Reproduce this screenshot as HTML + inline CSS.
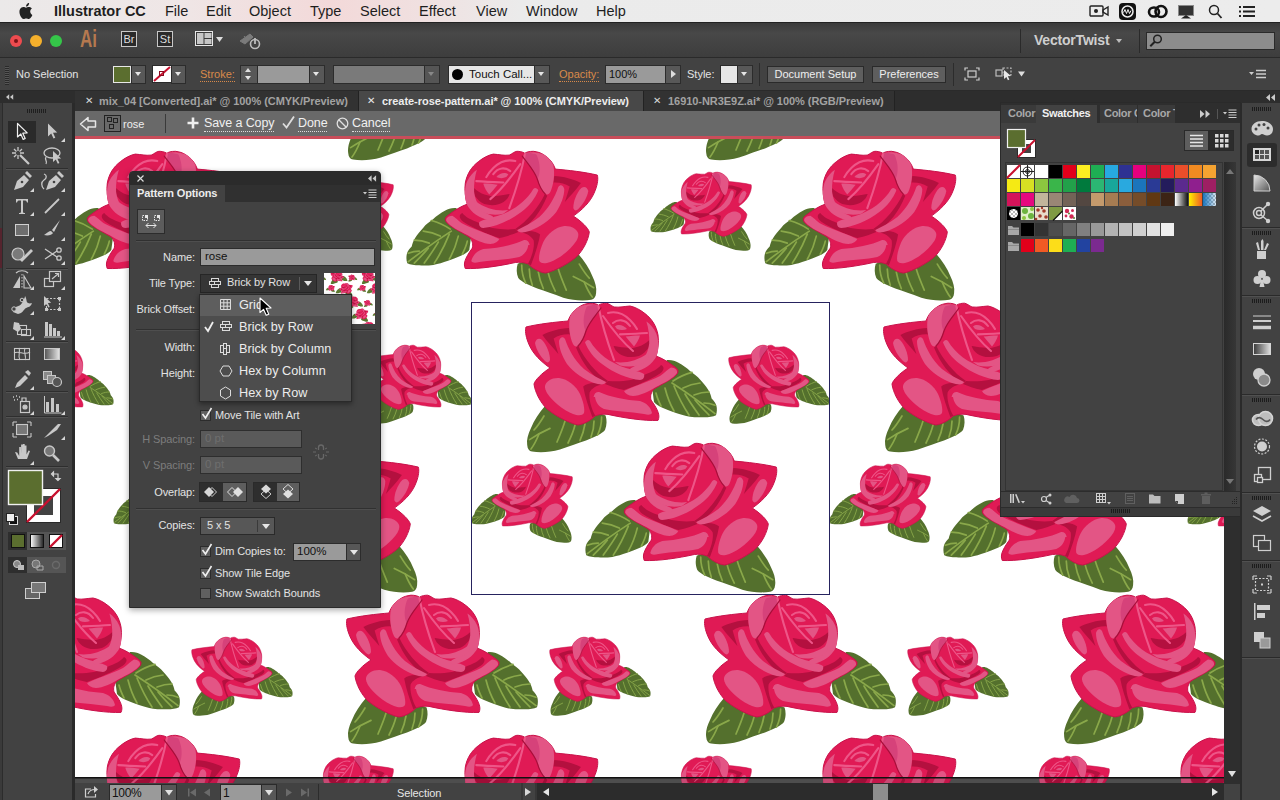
<!DOCTYPE html>
<html><head><meta charset="utf-8"><title>Illustrator CC</title>
<style>
*{box-sizing:border-box;margin:0;padding:0}
html,body{width:1280px;height:800px;overflow:hidden;background:#424242}
body{position:relative;font-family:"Liberation Sans",sans-serif;font-size:12px;color:#e0e0e0;-webkit-font-smoothing:antialiased}
.abs{position:absolute}
#menubar{position:absolute;left:0;top:0;width:1280px;height:22px;background:linear-gradient(90deg,#ebe9e9 0,#efe6e6 180px,#f3d9d9 330px,#f0e0e0 420px,#ebebeb 520px,#ececec 100%);color:#1e1e1e;font-size:14.5px}
#menubar span{position:absolute;top:2px;line-height:18px;white-space:nowrap}
#appbar{position:absolute;left:0;top:22px;width:1280px;height:36px;background:linear-gradient(#3b3b3b,#484848 30%,#3d3d3d 100%);border-top:1px solid #222;border-bottom:1px solid #2a2a2a}
#ctrlbar{position:absolute;left:0;top:58px;width:1280px;height:33px;background:#424242;border-bottom:1px solid #2a2a2a}
#tabbar{position:absolute;left:0;top:91px;width:1280px;height:20px;background:#2d2d2d}
#patbar{position:absolute;left:75px;top:111px;width:1165px;height:25px;background:#696969}
#redline{position:absolute;left:75px;top:136px;width:1165px;height:3px;background:#c94d5a}
#toolbar{position:absolute;left:0;top:103px;width:73px;height:697px;background:#424242;border-left:3px solid #2c2c2c}
#canvas{position:absolute;left:75px;top:139px;width:1149px;height:644px;background:#fff;overflow:hidden}
.lbl{position:absolute;white-space:nowrap;line-height:14px}
.fld{position:absolute;background:#9a9a9a;border:1px solid #2c2c2c;color:#111}
.dd{position:absolute;background:#585858;border:1px solid #2c2c2c}
.tri{position:absolute;width:0;height:0;border-left:4px solid transparent;border-right:4px solid transparent;border-top:5px solid #e6e6e6}
</style></head><body>
<div id="canvas"><svg width="1149" height="644" viewBox="0 0 1149 644" style="position:absolute;left:0;top:0">
<defs><g id="rose" transform="scale(0.2)">
<!-- leaves -->
<path fill="#54702d" d="M125,550 C95,585 70,620 55,660 C40,690 32,720 36,745 C38,765 45,775 60,778 C100,785 150,782 200,768 C250,750 290,735 330,722 C370,705 410,690 425,670 C435,645 435,620 428,598 L330,560 Z"/>
<path fill="#54702d" d="M735,320 C760,318 775,325 790,332 C815,345 835,360 850,375 C870,390 888,402 900,418 C915,435 930,450 940,468 C950,482 955,498 958,512 C970,525 978,535 982,548 C986,565 985,582 980,596 C965,604 945,606 920,606 C895,608 870,606 850,604 C825,600 800,592 780,585 C755,578 735,568 715,560 C695,552 680,542 670,530 L662,470 Z"/>
<g fill="none" stroke="#8aa84a" stroke-width="8.500" stroke-linecap="round">
<path d="M150,662 C110,680 75,700 48,718"/><path d="M95,690 C85,715 70,745 55,765"/>
<path d="M225,625 C215,660 200,695 185,730"/><path d="M275,645 C268,675 255,705 240,735"/><path d="M325,640 C320,670 312,695 300,722"/><path d="M370,625 C370,655 365,680 355,705"/><path d="M408,605 C408,640 400,670 388,695"/><path d="M120,600 C105,625 90,650 70,670"/>
<path d="M760,435 C830,480 900,530 975,588"/>
<path d="M765,425 C795,405 830,390 860,382"/><path d="M815,460 C845,445 875,438 900,435"/><path d="M870,495 C895,485 920,480 945,480"/><path d="M920,535 C940,535 960,540 975,546"/>
<path d="M680,485 C685,510 695,530 705,550"/><path d="M725,460 C735,500 750,540 770,575"/><path d="M770,450 C790,500 815,550 845,595"/><path d="M825,490 C845,525 870,560 895,595"/><path d="M875,520 C895,545 920,570 945,595"/>
</g>
<!-- base -->
<path fill="#e01a55" stroke="#c8124a" stroke-width="5" stroke-linejoin="round" d="M30,155 C25,170 28,200 40,230 C55,270 80,310 150,360 C110,385 75,420 70,440 C75,480 100,530 135,565 C190,610 260,640 290,645 C320,640 350,625 375,600 C400,590 420,590 440,592 C520,610 620,625 690,622 C700,600 695,575 655,520 C650,500 655,480 670,465 C710,440 765,415 785,390 C795,375 790,365 775,355 C750,335 710,310 680,300 C690,270 695,230 690,195 C682,150 660,115 625,88 C600,68 575,55 550,50 C520,52 500,58 470,55 C455,48 445,38 432,36 C420,36 405,38 392,46 C385,40 370,36 350,36 C330,38 312,44 300,52 C270,70 250,95 240,125 C180,130 90,140 30,155 Z"/>
<!-- dark shadows -->
<path fill="#b4103f" d="M112,195 C150,175 200,162 245,160 L250,192 C222,190 192,196 168,212 C176,240 184,265 192,290 C168,262 135,228 112,195 Z"/>
<path fill="#b4103f" d="M292,250 C325,320 380,385 440,425 C432,430 425,433 416,434 C360,398 312,338 280,258 Z"/>
<path fill="#b4103f" d="M440,425 C500,430 570,425 620,395 C660,380 690,365 705,345 C725,355 720,372 700,388 C650,420 580,450 520,470 C480,462 450,450 425,440 Z"/>
<path fill="#b4103f" d="M468,250 C480,290 530,318 595,300 C635,282 655,245 652,215 C625,245 575,268 525,258 C500,255 480,252 468,250 Z"/>
<path fill="#b4103f" d="M316,452 C335,436 368,430 412,440 C382,448 358,462 348,482 C343,512 355,560 376,598 L362,606 C345,560 325,505 316,452 Z"/>
<!-- pink highlights -->
<path fill="#e35585" d="M250,105 C265,75 285,58 305,50 C335,40 365,38 390,46 C402,56 400,70 390,85 C360,110 340,140 328,175 C320,205 310,230 295,245 C285,255 272,255 265,240 C250,210 240,150 250,105 Z"/>
<path fill="#d6427a" d="M335,52 C355,44 378,42 392,48 C402,58 398,72 388,86 C362,110 342,140 330,176 C318,160 315,120 322,90 C326,72 330,60 335,52 Z"/>
<path fill="#e35585" d="M75,235 C80,215 95,208 110,220 C135,245 150,290 150,320 C145,335 135,335 125,325 C100,300 80,265 75,235 Z"/>
<path fill="#e35585" d="M195,225 C200,205 215,200 225,215 C240,260 270,320 320,365 C360,395 400,415 430,430 C425,445 400,445 370,435 C320,418 270,385 235,340 C210,300 195,260 195,225 Z"/>
<path fill="#e35585" d="M325,232 C330,220 342,216 350,225 C385,285 450,335 530,360 C570,372 605,380 620,390 C625,405 615,420 600,420 C540,415 470,385 410,340 C370,310 340,270 325,232 Z"/>
<path fill="#e35585" d="M125,450 C130,425 160,408 195,410 C240,415 280,450 300,490 C315,525 325,560 320,585 C310,600 290,598 265,590 C215,570 160,525 135,485 C128,472 124,460 125,450 Z"/>
<path fill="#e35585" d="M368,505 C370,488 382,478 396,480 C450,505 530,520 600,525 C635,535 655,560 660,585 C655,595 640,595 620,590 C550,578 470,578 420,565 C395,555 378,530 375,505 Z"/>
<path fill="#e35585" d="M520,475 C560,455 640,430 700,400 C725,385 740,365 755,358 C775,360 788,370 785,385 C770,410 720,435 680,455 C640,480 600,498 565,500 C540,498 525,488 520,475 Z"/>
<path fill="#e35585" d="M528,203 C560,198 595,196 600,198 C595,215 585,235 570,252 C555,235 540,218 528,203 Z"/>
<path fill="#e35585" d="M632,128 C650,140 668,160 680,185 C690,205 694,240 690,275 C686,295 680,308 672,318 C648,354 600,378 558,382 C543,374 548,362 563,356 C608,338 640,296 646,238 C648,200 642,160 632,128 Z"/>
<path fill="#e35585" d="M475,152 C490,140 515,142 535,165 C520,172 500,172 485,165 Z"/>
<path fill="#e35585" d="M475,330 C520,338 590,325 640,285 C650,296 642,315 625,330 C595,352 540,358 500,348 Z"/>
<!-- thin lines -->
<g fill="none" stroke="#ee5688" stroke-width="10.500" stroke-linecap="round">
<path d="M392,50 C405,120 430,210 470,320"/>
<path d="M415,100 C450,150 500,220 565,275"/>
<path d="M440,85 C480,75 520,90 550,120 C570,140 580,155 585,165"/>
<path d="M500,192 C545,190 590,188 635,185"/>
<path d="M465,135 C490,115 525,115 550,150"/>
</g>
<g fill="none" stroke="#a80e3a" stroke-width="6" stroke-linecap="round">
<path d="M405,60 C385,90 345,130 330,175 C320,210 305,235 290,250"/>
</g>
</g>
<g id="tile">
<use href="#rose" transform="translate(49,-6)"/>
<use href="#rose" transform="translate(254.8,39.4) scale(0.527)"/>
<use href="#rose" transform="translate(104.3,158.4) scale(-0.527,0.527)"/>
<use href="#rose" transform="translate(311.3,134.1) scale(-1,1)"/>
</g></defs>
<rect x="0" y="639" width="1149" height="5" fill="#595959"/>
<use href="#tile" x="-141" y="-129"/><use href="#tile" x="217" y="-129"/><use href="#tile" x="575" y="-129"/><use href="#tile" x="933" y="-129"/><use href="#tile" x="-320" y="163"/><use href="#tile" x="38" y="163"/><use href="#tile" x="396" y="163"/><use href="#tile" x="754" y="163"/><use href="#tile" x="1112" y="163"/><use href="#tile" x="-141" y="455"/><use href="#tile" x="217" y="455"/><use href="#tile" x="575" y="455"/><use href="#tile" x="933" y="455"/><use href="#tile" x="-320" y="747"/><use href="#tile" x="38" y="747"/><use href="#tile" x="396" y="747"/><use href="#tile" x="754" y="747"/><use href="#tile" x="1112" y="747"/>
<rect x="396.5" y="163.5" width="358" height="292" fill="none" stroke="#26235e" stroke-width="1"/>
<rect x="0" y="639" width="1149" height="5" fill="#000" fill-opacity="0.12"/>
<rect x="0" y="638" width="1149" height="1.5" fill="#111"/>
</svg></div>
<div id="menubar">
<svg class="abs" style="left:19px;top:2px" width="16" height="18" viewBox="0 0 16 18"><path fill="#222" d="M11.2,9.6c0-2,1.6-2.9,1.7-3-0.9-1.4-2.4-1.5-2.9-1.6-1.2-0.1-2.4,0.7-3,0.7-0.6,0-1.600-0.700-2.600-0.700-1.300,0-2.600,0.800-3.300,2-1.400,2.400-0.400,6,1,8,0.700,1,1.500,2,2.500,2,1,0,1.400-0.600,2.600-0.600,1.200,0,1.600,0.600,2.600,0.600,1.100,0,1.800-1,2.400-1.900,0.800-1.100,1.100-2.200,1.100-2.200,0,0-2.100-0.800-2.100-3.300zM9.300,3.600c0.500-0.700,0.900-1.600,0.800-2.600-0.800,0-1.700,0.500-2.300,1.200-0.500,0.600-0.900,1.500-0.800,2.400,0.900,0.100,1.800-0.400,2.300-1z"/></svg>
<span style="left:54px;font-weight:bold">Illustrator CC</span>
<span style="left:165px">File</span><span style="left:206px">Edit</span><span style="left:249px">Object</span><span style="left:310px">Type</span><span style="left:360px">Select</span><span style="left:419px">Effect</span><span style="left:476px">View</span><span style="left:526px">Window</span><span style="left:596px">Help</span>
<!-- status icons -->
<svg class="abs" style="left:1088px;top:2px" width="180" height="18" viewBox="0 0 180 18">
<g fill="none" stroke="#222" stroke-width="1.4"><rect x="2" y="4" width="13" height="10" rx="1"/><path d="M15,8 l5,-3 v8 l-5,-3z" fill="none"/></g><circle cx="8" cy="9" r="2" fill="#222"/>
<rect x="31" y="1" width="17" height="17" rx="4" fill="#111"/><circle cx="39.500" cy="9.500" r="5.500" fill="none" stroke="#eee" stroke-width="1.500"/><path d="M35.500,10.500 l1.500,-3 1.500,4 1.500,-4 1.500,4 1.500,-3" fill="none" stroke="#eee" stroke-width="1"/>
<g fill="none" stroke="#111" stroke-width="2.600"><ellipse cx="66" cy="10" rx="5" ry="4.500"/><ellipse cx="73" cy="9.500" rx="5.500" ry="5.500"/></g>
<rect x="90.500" y="3.500" width="15" height="10" fill="#333" stroke="#8a8a8a"/><path d="M93,16.500 l5,-3.500 5,3.500z" fill="#222"/>
<circle cx="126" cy="8" r="4.500" fill="none" stroke="#222" stroke-width="1.500"/><path d="M129.500,11.500 l4,4.500" stroke="#222" stroke-width="1.800"/>
<g stroke="#222" stroke-width="1.800"><path d="M155,5h12M155,9.500h12M155,14h12"/><path d="M151,5h2M151,9.500h2M151,14h2"/></g>
</svg>
</div>
<div id="appbar">
<div class="abs" style="left:10px;top:12px;width:12px;height:12px;border-radius:6px;background:#ee4b4f"></div><div class="abs" style="left:14px;top:16px;width:4px;height:4px;border-radius:2px;background:#7a1418"></div>
<div class="abs" style="left:30px;top:12px;width:12px;height:12px;border-radius:6px;background:#f5b02c"></div>
<div class="abs" style="left:50px;top:12px;width:12px;height:12px;border-radius:6px;background:#35c649"></div>
<span class="lbl" style="left:80px;top:3px;font-size:23px;line-height:26px;color:#b5794f;font-weight:bold;transform:scaleX(.74);transform-origin:0 0">Ai</span>
<div class="abs" style="left:121px;top:8px;width:16px;height:16px;border:1px solid #c8c8c8;background:#2a2a2a;color:#ddd;font-size:11px;line-height:14px;text-align:center">Br</div>
<div class="abs" style="left:157px;top:8px;width:16px;height:16px;border:1px solid #c8c8c8;background:#2a2a2a;color:#ddd;font-size:11px;line-height:14px;text-align:center">St</div>
<svg class="abs" style="left:195px;top:8px" width="30" height="16" viewBox="0 0 30 16"><rect x="0.500" y="0.500" width="17" height="14" fill="#3a3a3a" stroke="#e8e8e8"/><rect x="2" y="2" width="6.500" height="11" fill="#c6c6c6"/><rect x="9.500" y="2" width="7" height="5" fill="#c6c6c6"/><rect x="9.500" y="8" width="7" height="5" fill="#c6c6c6"/><path d="M21,6 h7 l-3.500,5z" fill="#ddd"/></svg>
<svg class="abs" style="left:238px;top:8px" width="24" height="20" viewBox="0 0 24 20"><path d="M2,10 l10,-7 3,3 -8,7z M6,5 l4,5" fill="#7b7b7b" stroke="#7b7b7b"/><circle cx="17" cy="13" r="4.500" fill="none" stroke="#bdbdbd" stroke-width="1.600"/><path d="M17,7 v6" stroke="#bdbdbd" stroke-width="1.800"/></svg>
<div class="abs" style="left:1020px;top:6px;width:1px;height:24px;background:#2a2a2a"></div>
<span class="lbl" style="left:1034px;top:10px;font-size:14px;font-weight:bold;color:#cfcfcf;letter-spacing:-0.200px">VectorTwist</span>
<div class="tri" style="left:1116px;top:16px;border-left-width:3.500px;border-right-width:3.500px;border-top-width:4px;border-top-color:#bbb"></div>
<div class="abs" style="left:1139px;top:6px;width:1px;height:24px;background:#2a2a2a"></div>
<div class="abs" style="left:1146px;top:9px;width:129px;height:18px;background:#8c8c8c;border:1px solid #2a2a2a"></div>
<svg class="abs" style="left:1148px;top:10px" width="16" height="16" viewBox="0 0 16 16"><circle cx="9.500" cy="6" r="3.800" fill="none" stroke="#222" stroke-width="1.500"/><path d="M6.800,8.800 l-4.500,4.500" stroke="#222" stroke-width="2"/></svg>
</div>
<div id="ctrlbar">
<div class="abs" style="left:5px;top:8px;width:4px;height:19px;background:repeating-linear-gradient(#2a2a2a 0 1px,#555 1px 2px)"></div>
<span class="lbl" style="left:16px;top:9px;font-size:11px;color:#e4e4e4">No Selection</span>
<div class="abs" style="left:113px;top:8px;width:18px;height:17px;background:#5b6e2f;border:1px solid #e8e8e8"></div>
<div class="dd" style="left:131px;top:7px;width:15px;height:19px"></div><div class="tri" style="left:135px;top:14px;border-left-width:3.500px;border-right-width:3.500px;border-top-width:4px"></div>
<svg class="abs" style="left:152px;top:7px" width="20" height="18" viewBox="0 0 20 18"><rect x="0.500" y="0.500" width="19" height="17" fill="#fff" stroke="#2a2a2a"/><path d="M2,16 L18,2" stroke="#c8102e" stroke-width="2"/><rect x="7.500" y="6.500" width="4" height="4" fill="none" stroke="#8a0a1e"/></svg>
<div class="dd" style="left:171px;top:7px;width:15px;height:19px"></div><div class="tri" style="left:175px;top:14px;border-left-width:3.500px;border-right-width:3.500px;border-top-width:4px"></div>
<span class="lbl" style="left:200px;top:10px;font-size:11px;color:#d98a4a;border-bottom:1px dotted #d98a4a;line-height:13px">Stroke:</span>
<div class="dd" style="left:240px;top:7px;width:18px;height:19px"></div>
<div class="tri" style="left:245px;top:10px;border-top:none;border-bottom:4px solid #ddd;border-left-width:3.500px;border-right-width:3.500px"></div><div class="tri" style="left:245px;top:18px;border-left-width:3.500px;border-right-width:3.500px;border-top-width:4px"></div>
<div class="fld" style="left:257px;top:7px;width:53px;height:19px"></div>
<div class="dd" style="left:309px;top:7px;width:16px;height:19px"></div><div class="tri" style="left:313px;top:14px;border-left-width:3.500px;border-right-width:3.500px;border-top-width:4px"></div>
<div class="fld" style="left:333px;top:7px;width:92px;height:19px;background:#7a7a7a"></div>
<div class="dd" style="left:424px;top:7px;width:16px;height:19px;background:#555"></div><div class="tri" style="left:428px;top:14px;border-left-width:3.500px;border-right-width:3.500px;border-top-width:4px;border-top-color:#888"></div>
<div class="fld" style="left:448px;top:7px;width:87px;height:19px;background:#e6e6e6"></div>
<div class="abs" style="left:452px;top:10.500px;width:11px;height:11px;border-radius:6px;background:#000"></div>
<span class="lbl" style="left:469px;top:9px;font-size:11.500px;color:#111">Touch Call...</span>
<div class="dd" style="left:534px;top:7px;width:16px;height:19px"></div><div class="tri" style="left:538px;top:14px;border-left-width:3.500px;border-right-width:3.500px;border-top-width:4px"></div>
<span class="lbl" style="left:559px;top:10px;font-size:11px;color:#d98a4a;border-bottom:1px dotted #d98a4a;line-height:13px">Opacity:</span>
<div class="fld" style="left:605px;top:7px;width:61px;height:19px;font-size:11px;line-height:17px;padding-left:3px">100%</div>
<div class="dd" style="left:665px;top:7px;width:16px;height:19px"></div><div class="abs" style="left:671px;top:12px;width:0;height:0;border-top:4px solid transparent;border-bottom:4px solid transparent;border-left:5px solid #ddd"></div>
<span class="lbl" style="left:687px;top:9px;font-size:11px;color:#e4e4e4">Style:</span>
<div class="abs" style="left:720px;top:7px;width:18px;height:19px;background:#e6e6e6;border:1px solid #2a2a2a"></div>
<div class="dd" style="left:737px;top:7px;width:16px;height:19px"></div><div class="tri" style="left:741px;top:14px;border-left-width:3.500px;border-right-width:3.500px;border-top-width:4px"></div>
<div class="abs" style="left:759px;top:5px;width:1px;height:23px;background:#2c2c2c"></div>
<div class="abs" style="left:767px;top:8px;width:97px;height:17px;background:#5e5e5e;border:1px solid #2a2a2a;font-size:11px;line-height:15px;text-align:center;color:#eee">Document Setup</div>
<div class="abs" style="left:872px;top:8px;width:74px;height:17px;background:#5e5e5e;border:1px solid #2a2a2a;font-size:11px;line-height:15px;text-align:center;color:#eee">Preferences</div>
<div class="abs" style="left:953px;top:5px;width:1px;height:23px;background:#2c2c2c"></div>
<svg class="abs" style="left:964px;top:9px" width="16" height="14" viewBox="0 0 16 14"><g fill="none" stroke="#cfcfcf" stroke-width="1.200"><rect x="4" y="4" width="8" height="6"/><path d="M1,3.500V1h3M12,1h3v2.500M15,10.500V13h-3M4,13H1v-2.500"/></g></svg>
<svg class="abs" style="left:994px;top:8px" width="34" height="16" viewBox="0 0 34 16"><g fill="none" stroke="#bdbdbd" stroke-width="1.200"><rect x="2" y="4" width="6" height="6"/><rect x="9" y="2" width="8" height="7" stroke-dasharray="2 1.500"/></g><path d="M10,4 l7,6 -3.200,0.300 1.600,3.200 -1.500,0.700 -1.500,-3.200 -2.400,2z" fill="#e8e8e8"/><path d="M24,5.500h7l-3.500,5z" fill="#ddd"/></svg>
<svg class="abs" style="left:1249px;top:11px" width="18" height="10" viewBox="0 0 18 10"><path d="M0,3h5l-2.500,3z" fill="#ccc"/><path d="M7,1.500h10M7,5h10M7,8.500h10" stroke="#ccc" stroke-width="1.400"/></svg>
</div>
<div id="tabbar">
<div class="abs" style="left:75px;top:0;width:283px;height:20px;background:#323232"></div>
<div class="abs" style="left:358px;top:0;width:286px;height:20px;background:#484848;border-left:1px solid #222;border-right:1px solid #222"></div>
<div class="abs" style="left:644px;top:0;width:251px;height:20px;background:#323232;border-right:1px solid #222"></div>
<span class="lbl" style="left:85px;top:3px;font-size:9.500px;color:#d8d8d8">✕</span>
<span class="lbl tabt" style="left:99px;top:3px;color:#a2a2a2">mix_04 [Converted].ai* @ 100% (CMYK/Preview)</span>
<span class="lbl" style="left:367px;top:3px;font-size:9.500px;color:#e8e8e8">✕</span>
<span class="lbl tabt" style="left:382px;top:3px;color:#ededed">create-rose-pattern.ai* @ 100% (CMYK/Preview)</span>
<span class="lbl" style="left:653px;top:3px;font-size:9.500px;color:#d8d8d8">✕</span>
<span class="lbl tabt" style="left:668px;top:3px;color:#a2a2a2">16910-NR3E9Z.ai* @ 100% (RGB/Preview)</span>
<svg class="abs" style="left:6px;top:3px" width="8" height="6" viewBox="0 0 10 7"><path d="M4,0v7l-4,-3.500zM9,0v7l-4,-3.500z" fill="#c8c8c8"/></svg>
<svg class="abs" style="left:1266px;top:3px" width="10" height="7" viewBox="0 0 10 7"><path d="M4,0v7l-4,-3.500zM9,0v7l-4,-3.500z" fill="#c8c8c8"/></svg>
</div>
<div id="patbar">
<svg class="abs" style="left:4px;top:5px" width="18" height="16" viewBox="0 0 18 16"><path d="M1.500,8 L9,1.500 V5 H16.500 V11 H9 V14.500 Z" fill="#6a6a6a" stroke="#e6e6e6" stroke-width="1.500" stroke-linejoin="round"/></svg>
<svg class="abs" style="left:29px;top:4px" width="17" height="17" viewBox="0 0 17 17"><rect x="0.500" y="0.500" width="16" height="16" fill="none" stroke="#222"/><g fill="none" stroke="#222"><rect x="3.500" y="2.500" width="4" height="4"/><rect x="9.500" y="3.500" width="4" height="4"/><rect x="5.500" y="9.500" width="4" height="4"/></g></svg>
<span class="lbl" style="left:48px;top:6px;font-size:11px;color:#eee">rose</span>
<div class="abs" style="left:90px;top:3px;width:1px;height:19px;background:#3a3a3a"></div>
<svg class="abs" style="left:112px;top:6px" width="12" height="12" viewBox="0 0 12 12"><path d="M6,0.500v11M0.500,6h11" stroke="#eee" stroke-width="2.600"/></svg>
<span class="lbl ul" style="left:129px;top:5px">Save a Copy</span>
<svg class="abs" style="left:207px;top:5px" width="13" height="13" viewBox="0 0 13 13"><path d="M1,7.500 L4.500,11.500 L12,0.500" fill="none" stroke="#ddd" stroke-width="1.800"/></svg>
<span class="lbl ul" style="left:223px;top:5px">Done</span>
<svg class="abs" style="left:261px;top:6px" width="13" height="13" viewBox="0 0 13 13"><circle cx="6.500" cy="6.500" r="5.300" fill="none" stroke="#e0e0e0" stroke-width="1.300"/><path d="M2.800,2.800 L10.200,10.200" stroke="#e0e0e0" stroke-width="1.300"/></svg>
<span class="lbl ul" style="left:277px;top:5px">Cancel</span>
</div>
<div id="redline"></div>
<style>.tabt{font-size:11px;font-weight:bold;letter-spacing:-0.050px}.ul{font-size:12.500px;letter-spacing:-0.100px;color:#f0f0f0;border-bottom:1px dotted #ddd;line-height:15px}</style>
<div id="toolbar"></div>
<div class="abs" style="left:0;top:103px;width:2px;height:697px;background:#3a3a3a"></div>
<div class="abs" style="left:0;top:228px;width:2px;height:40px;background:#55242e"></div>
<div class="abs" style="left:72px;top:103px;width:3px;height:697px;background:#2a2a2a"></div>
<svg class="abs" style="left:0;top:103px" width="73" height="520" viewBox="0 103 73 520">
<defs><path id="tc" d="M0,0h-4l4,-4z" fill="#d6d6d6"/></defs>
<g fill="#1f1f1f"><rect x="27" y="109" width="1" height="4"/><rect x="29" y="109" width="1" height="4"/><rect x="31" y="109" width="1" height="4"/><rect x="33" y="109" width="1" height="4"/><rect x="35" y="109" width="1" height="4"/><rect x="37" y="109" width="1" height="4"/><rect x="39" y="109" width="1" height="4"/><rect x="41" y="109" width="1" height="4"/><rect x="43" y="109" width="1" height="4"/><rect x="45" y="109" width="1" height="4"/></g>
<g stroke="#2e2e2e" stroke-width="1"><path d="M6,168.500h62M6,268.500h62M6,341.500h62M6,391.500h62M6,416.500h62M6,466.500h62"/></g>
<g stroke="#525252" stroke-width="1"><path d="M6,169.500h62M6,269.500h62M6,342.500h62M6,392.500h62M6,417.500h62M6,467.500h62"/></g>
<rect x="8" y="121" width="28" height="22" fill="#2a2a2a"/>
<!-- selection -->
<path d="M17.500,123.500 v13.500 l3.300,-3 2.400,5.400 2,-0.900 -2.400,-5.300 4.400,-0.300z" fill="#2a2a2a" stroke="#f0f0f0" stroke-width="1.200" stroke-linejoin="round"/>
<path d="M48,123.500 v13 l3.200,-3 2.300,5 1.800,-0.800 -2.300,-5 4.200,-0.300z" fill="#c8c8c8"/>
<use href="#tc" x="65" y="142"/>
<!-- magic wand / lasso -->
<g stroke="#c8c8c8" stroke-width="1.300" fill="none"><path d="M20,155 l9,9" stroke-width="2.200"/><path d="M18,147v4M18,155v4M12,153h4M20,153h4M14,149l2.500,2.500M22,149l-2.500,2.500M14,157l2.500,-2.500"/></g>
<g stroke="#c8c8c8" stroke-width="1.300" fill="none"><ellipse cx="52" cy="153" rx="8" ry="5"/><path d="M46,157 c-2,3 2,4 0,7"/></g><path d="M53,151 v11 l2.800,-2.600 2,4.400 1.600,-0.700 -2,-4.400 3.700,-0.300z" fill="#c8c8c8"/>
<!-- pen / curvature -->
<g fill="#c8c8c8"><path d="M14,190 l3,-9 7,-6 5,5 -6,7z M25,173 l2,-2 5,5 -2,2z"/><circle cx="22" cy="182" r="1.300" fill="#424242"/></g>
<g fill="#c8c8c8"><path d="M46,190 l3,-9 7,-6 5,5 -6,7z M57,173 l2,-2 5,5 -2,2z"/><circle cx="54" cy="182" r="1.300" fill="#424242"/></g><path d="M44,174 c3,1 3,4 0,6 c-3,2 -3,6 0,9" fill="none" stroke="#c8c8c8" stroke-width="1.300"/>
<use href="#tc" x="34" y="192"/><use href="#tc" x="65" y="192"/>
<!-- type / line -->
<path d="M16,199h12v3.500h-1c-0.500,-1.500 -1,-2 -2.500,-2h-1.500v11c0,1 0.500,1.500 2,1.500v1h-6v-1c1.500,0 2,-0.500 2,-1.500v-11h-1.500c-1.500,0 -2,0.500 -2.500,2h-1z" fill="#c8c8c8"/>
<path d="M45,213 L59,199" stroke="#c8c8c8" stroke-width="1.800"/>
<use href="#tc" x="34" y="216"/><use href="#tc" x="65" y="216"/>
<!-- rect / brush -->
<rect x="15.500" y="224.500" width="13" height="11" fill="#6e6e6e" stroke="#d0d0d0"/>
<path d="M60,220 l-8,10 2,2z M51,231 c-2,0 -4,2 -7,4 c4,1 8,0 9,-2z" fill="#c8c8c8"/>
<use href="#tc" x="34" y="241"/><use href="#tc" x="65" y="241"/>
<!-- shaper / scissors -->
<circle cx="18" cy="254" r="6" fill="#7a7a7a" stroke="#c8c8c8" stroke-width="1.200"/><path d="M20,260 l11,-11 2,2 -11,11z" fill="#c8c8c8"/>
<g fill="none" stroke="#c8c8c8" stroke-width="1.300"><path d="M45,249 l12,8M45,259 l12,-8"/><circle cx="59" cy="250" r="2.200"/><circle cx="59" cy="258" r="2.200"/></g>
<use href="#tc" x="34" y="265"/><use href="#tc" x="65" y="265"/>
<!-- reflect / scale -->
<g fill="#c8c8c8"><path d="M20,276 v12 l-7,0z" /><path d="M24,276 v12 l7,0z" fill="none" stroke="#c8c8c8" stroke-width="1.100"/><path d="M22,274v15" stroke="#c8c8c8" stroke-dasharray="1.500 1.500"/><path d="M16,273 c3,-3 9,-3 12,0" fill="none" stroke="#c8c8c8" stroke-width="1.200"/></g>
<g fill="none" stroke="#c8c8c8" stroke-width="1.200"><rect x="44.500" y="278.500" width="9" height="8"/><rect x="49.500" y="271.500" width="11" height="10" fill="#424242"/><path d="M52,279 l6,-5 M55,273.500h3.500v3.500"/></g>
<use href="#tc" x="34" y="290"/><use href="#tc" x="65" y="290"/>
<!-- puppet / free transform -->
<g fill="#c8c8c8"><path d="M13,312 c2,-8 6,-4 9,-9 c3,-5 3,-7 3,-7 c2,3 1,6 3,7 c2,1 4,0 4,0 c-1,4 -4,4 -6,5 c-3,2 -3,5 -8,6z"/><circle cx="14" cy="309" r="2.200" fill="#424242" stroke="#c8c8c8"/><circle cx="22" cy="300" r="1.800" fill="#424242" stroke="#c8c8c8"/></g>
<g fill="none" stroke="#c8c8c8" stroke-width="1.200"><rect x="46.500" y="298.500" width="13" height="11" stroke-dasharray="2 1.500"/></g><path d="M44,296 v10 l2.500,-2.300 1.800,3.900 1.400,-0.600 -1.800,-3.900 3.300,-0.300z" fill="#c8c8c8"/><g fill="#c8c8c8"><rect x="58" y="297" width="3" height="3"/><rect x="58" y="308" width="3" height="3"/><rect x="45" y="308" width="3" height="3"/></g>
<use href="#tc" x="34" y="315"/>
<!-- shape builder / perspective -->
<g fill="none" stroke="#c8c8c8" stroke-width="1.100"><rect x="17.500" y="325.500" width="9" height="9"/><rect x="21.500" y="329.500" width="9" height="6"/></g><path d="M14,322 l5,1 2,6 -3,3 -5,-3z" fill="#c8c8c8"/>
<g fill="#c8c8c8"><path d="M45,322v14h3v-14zM49,324v12h3v-12zM53,328v8h3v-8zM57,331v5h3v-5z"/><path d="M44,337h18" stroke="#c8c8c8"/></g>
<use href="#tc" x="34" y="340"/><use href="#tc" x="65" y="340"/>
<!-- mesh / gradient -->
<g fill="none" stroke="#c8c8c8" stroke-width="1.100"><rect x="14.500" y="348.500" width="15" height="11"/><path d="M14,353 c5,-3 10,3 16,-1M19,348 c2,4 -2,8 1,12M25,348 c-2,4 2,8 0,12"/></g>
<defs><linearGradient id="gr1"><stop offset="0" stop-color="#555"/><stop offset="1" stop-color="#e6e6e6"/></linearGradient></defs>
<rect x="44.500" y="348.500" width="15" height="11" fill="url(#gr1)" stroke="#c8c8c8"/>
<!-- eyedropper / blend -->
<path d="M15,388 l2,-5 8,-8 3,3 -8,8z M25,372 l3,-2 3,3 -2,3z" fill="#c8c8c8"/>
<g><rect x="43.500" y="371.500" width="8" height="8" fill="#8a8a8a" stroke="#c8c8c8"/><rect x="47.500" y="375.500" width="8" height="8" fill="#8a8a8a" stroke="#c8c8c8"/><circle cx="57" cy="382" r="4.500" fill="#555" stroke="#c8c8c8" stroke-width="1.200"/></g>
<use href="#tc" x="34" y="390"/>
<!-- sprayer / graph -->
<g fill="none" stroke="#c8c8c8" stroke-width="1.200"><rect x="20.500" y="401.500" width="9" height="11"/><circle cx="25" cy="407" r="2" fill="#c8c8c8"/><path d="M22,401v-3h4v3"/><path d="M13,397h1M16,396h1M19,397h1M14,400h1M17,399.500h1" stroke-width="1.500"/></g>
<g fill="#c8c8c8"><rect x="46" y="402" width="3" height="10"/><rect x="51" y="398" width="3" height="14"/><rect x="56" y="404" width="3" height="8"/><path d="M44.500,396v17h17" fill="none" stroke="#c8c8c8"/></g>
<use href="#tc" x="34" y="415"/><use href="#tc" x="65" y="415"/>
<!-- artboard / slice -->
<g stroke="#c8c8c8" stroke-width="1.100" fill="none"><rect x="16.500" y="424.500" width="11" height="10" fill="#777"/><path d="M13,422h4M13,422v4M31,422h-4M31,422v4M13,437h4M13,437v-4M31,437h-4M31,437v-4" /></g>
<path d="M44,438 l14,-14 3,0 -4,6 -9,6z" fill="#c8c8c8"/>
<use href="#tc" x="65" y="440"/>
<!-- hand / zoom -->
<path d="M15,452 l3,7 h9 l3,-8 -1.500,-0.500 -2,4 v-9 h-1.800 v7 -8.500 h-1.800 v8 -7.500 h-1.800 v8.500 l-0.200,-6 h-1.700 v9 l-2,-3.500z" fill="#c8c8c8"/>
<circle cx="49.500" cy="451" r="5" fill="#777" stroke="#c8c8c8" stroke-width="1.400"/><path d="M53,455 l6,6" stroke="#c8c8c8" stroke-width="2.600"/>
<use href="#tc" x="34" y="465"/>
<!-- fill/stroke -->
<rect x="26.500" y="488.500" width="34" height="34" fill="#fff" stroke="#2a2a2a"/><rect x="34" y="496" width="19" height="19" fill="#424242"/><path d="M27,522 L60,489" stroke="#c8102e" stroke-width="2.400"/>
<rect x="8.500" y="470.500" width="34" height="34" fill="#5b6e2f" stroke="#f0f0f0" stroke-width="1.400"/>
<g fill="none" stroke="#d0d0d0" stroke-width="1.200"><path d="M53,474 h5 v5"/><path d="M51.500,474 l2,-2v4z M58,480.500 l-2,-2h4z" fill="#d0d0d0"/></g>
<rect x="9.500" y="516.500" width="8" height="8" fill="#111" stroke="#ddd"/><rect x="6.500" y="513.500" width="8" height="8" fill="#eee" stroke="#222"/>
<!-- color mode row -->
<rect x="8" y="532" width="58" height="18" fill="#2e2e2e"/><rect x="27" y="532" width="39" height="18" fill="#555"/>
<rect x="11.500" y="534.500" width="13" height="13" fill="#5b6e2f" stroke="#111"/>
<defs><linearGradient id="gr2"><stop offset="0" stop-color="#fff"/><stop offset="1" stop-color="#222"/></linearGradient></defs>
<rect x="30.500" y="534.500" width="13" height="13" fill="url(#gr2)" stroke="#111"/>
<rect x="49.500" y="534.500" width="13" height="13" fill="#fff" stroke="#111"/><path d="M50,547 L62,535" stroke="#c8102e" stroke-width="2.400"/>
<!-- draw mode row -->
<rect x="8" y="557" width="58" height="16" fill="#2e2e2e"/><rect x="27" y="557" width="39" height="16" fill="#555"/>
<circle cx="17" cy="564" r="3.500" fill="#888" stroke="#ccc"/><rect x="18" y="565" width="6" height="5" fill="#bbb"/>
<circle cx="36" cy="564" r="4" fill="#777" stroke="#aaa"/><path d="M37,566h6v4h-6z" fill="none" stroke="#aaa"/>
<circle cx="56" cy="565" r="3.500" fill="none" stroke="#6a6a6a" stroke-width="1.400"/>
<!-- screen mode -->
<rect x="25.500" y="588.500" width="14" height="10" fill="#666" stroke="#cfcfcf"/><rect x="31.500" y="582.500" width="14" height="10" fill="#777" stroke="#cfcfcf"/>
</svg>
<style>
#pp{position:absolute;left:129px;top:171px;width:252px;height:437px;background:#424242;border:1px solid #2a2a2a;border-radius:4px 4px 0 0;box-shadow:0 2px 6px rgba(0,0,0,.35)}
#pp .l{position:absolute;margin-top:-1px;letter-spacing:-0.100px;white-space:nowrap;font-size:11px;line-height:14px;color:#e2e2e2;text-align:right;width:80px}
#pp .t{position:absolute;margin-top:-1px;letter-spacing:-0.100px;white-space:nowrap;font-size:11px;line-height:14px;color:#e2e2e2}
#pp .dim{color:#7d7d7d}
#pp .sep{position:absolute;left:6px;width:240px;height:2px;border-top:1px solid #303030;border-bottom:1px solid #4e4e4e}
.cb{position:absolute;width:11px;height:11px;background:#606060;border:1px solid #2c2c2c}
</style>
<div id="pp">
<div class="abs" style="left:0;top:0;width:250px;height:13px;background:#2b2b2b;border-radius:3px 3px 0 0"></div>
<div class="abs" style="left:0;top:13px;width:250px;height:17px;background:#303030"></div>
<div class="abs" style="left:0;top:13px;width:95px;height:17px;background:#424242"></div>
<span class="t" style="left:7px;top:15px;font-weight:bold;font-size:11px;letter-spacing:-0.150px;color:#ececec">Pattern Options</span>
<svg class="abs" style="left:7px;top:3px" width="7" height="7" viewBox="0 0 7 7"><path d="M0.500,0.500l6,6M6.500,0.500l-6,6" stroke="#ddd" stroke-width="1.200"/></svg>
<svg class="abs" style="left:238px;top:3px" width="9" height="7" viewBox="0 0 10 7"><path d="M4,0v7l-4,-3.500zM9,0v7l-4,-3.500z" fill="#c8c8c8"/></svg>
<svg class="abs" style="left:233px;top:17px" width="14" height="9" viewBox="0 0 14 9"><path d="M0,3h4l-2,2.500z" fill="#ccc"/><path d="M5.500,1h8M5.500,3.500h8M5.500,6h8M5.500,8.500h8" stroke="#ccc" stroke-width="1.100"/></svg>
<!-- tile tool button -->
<div class="abs" style="left:7px;top:37px;width:28px;height:25px;background:#5c5c5c;border:1px solid #2c2c2c"></div>
<svg class="abs" style="left:11px;top:41px" width="20" height="17" viewBox="0 0 20 17"><g fill="none" stroke="#e6e6e6" stroke-width="1"><rect x="1.500" y="2.500" width="5" height="5" stroke-dasharray="1.500 1"/><rect x="13.500" y="2.500" width="5" height="5" stroke-dasharray="1.500 1"/><path d="M5,12.500h10M5,12.500l2.500,-2.500M5,12.500l2.500,2.500M15,12.500l-2.500,-2.500M15,12.500l-2.500,2.500"/></g><rect x="4" y="2" width="3" height="3" fill="#e6e6e6"/><rect x="16" y="2" width="3" height="3" fill="#e6e6e6"/></svg>
<div class="sep" style="top:68px"></div>
<span class="l" style="left:-15px;top:79px">Name:</span>
<div class="fld" style="left:70px;top:76px;width:175px;height:18px;font-size:11.500px;line-height:15px;padding-left:4px">rose</div>
<span class="l" style="left:-15px;top:105px">Tile Type:</span>
<div class="abs" style="left:70px;top:102px;width:117px;height:19px;background:#353535;border:1px solid #262626"></div>
<svg class="abs" style="left:79px;top:106px" width="12" height="11" viewBox="0 0 12 11"><g fill="none" stroke="#d8d8d8" stroke-width="1" shape-rendering="crispEdges"><path d="M2.500,0.500h7v3h-7zM0.500,3.500h5v3h-5zM5.500,3.500h6v3h-6zM2.500,6.500h7v3h-7z"/></g></svg>
<span class="t" style="left:97px;top:104px">Brick by Row</span>
<div class="abs" style="left:169px;top:105px;width:1px;height:13px;background:#5a5a5a"></div>
<div class="tri" style="left:174px;top:109px;border-top-width:5px"></div>
<!-- preview thumb -->
<svg class="abs" style="left:194px;top:101px" width="51" height="51" viewBox="0 0 51 51"><rect width="51" height="51" fill="#fff"/><g transform="translate(1.95,-2) scale(0.087)"><use href="#tile" x="-179" y="-292"/><use href="#tile" x="179" y="-292"/><use href="#tile" x="537" y="-292"/><use href="#tile" x="895" y="-292"/><use href="#tile" x="-358" y="0"/><use href="#tile" x="0" y="0"/><use href="#tile" x="358" y="0"/><use href="#tile" x="716" y="0"/><use href="#tile" x="-179" y="292"/><use href="#tile" x="179" y="292"/><use href="#tile" x="537" y="292"/><use href="#tile" x="895" y="292"/><use href="#tile" x="-358" y="584"/><use href="#tile" x="0" y="584"/><use href="#tile" x="358" y="584"/><use href="#tile" x="716" y="584"/></g></svg>
<span class="l" style="left:-15px;top:131px">Brick Offset:</span>
<div class="sep" style="top:157px"></div>
<span class="l" style="left:-15px;top:169px">Width:</span>
<span class="l" style="left:-15px;top:195px">Height:</span>
<!-- checkbox move tile -->
<div class="cb" style="left:70px;top:238px"></div><svg class="abs" style="left:70px;top:234px" width="13" height="14" viewBox="0 0 13 14"><path d="M2.500,8 L5.500,12 L11.500,2" fill="none" stroke="#f0f0f0" stroke-width="1.600"/></svg>
<span class="t" style="left:85px;top:237px">Move Tile with Art</span>
<span class="l dim" style="left:-15px;top:261px">H Spacing:</span>
<div class="abs" style="left:70px;top:258px;width:102px;height:18px;background:#5a5a5a;border:1px solid #2e2e2e;color:#6e6e6e;font-size:11.500px;line-height:15px;padding-left:4px">0 pt</div>
<span class="l dim" style="left:-15px;top:287px">V Spacing:</span>
<div class="abs" style="left:70px;top:284px;width:102px;height:18px;background:#5a5a5a;border:1px solid #2e2e2e;color:#6e6e6e;font-size:11.500px;line-height:15px;padding-left:4px">0 pt</div>
<svg class="abs" style="left:182px;top:271px" width="18" height="18" viewBox="0 0 18 18"><g fill="none" stroke="#686868" stroke-width="1.300"><path d="M6.500,7v-2.500a2.500,2.500 0 0 1 5,0v2.500M6.500,11v2.500a2.500,2.500 0 0 0 5,0v-2.500"/><path d="M1,9h3M14,9h3M3,5l2,1M15,5l-2,1M3,13l2,-1M15,13l-2,-1" stroke-width="1"/></g></svg>
<span class="l" style="left:-15px;top:314px">Overlap:</span>
<div class="abs" style="left:69px;top:310px;width:48px;height:20px;background:#5e5e5e;border:1px solid #2a2a2a"></div><div class="abs" style="left:70px;top:311px;width:23px;height:18px;background:#2e2e2e"></div>
<div class="abs" style="left:123px;top:310px;width:47px;height:20px;background:#5e5e5e;border:1px solid #2a2a2a"></div><div class="abs" style="left:124px;top:311px;width:23px;height:18px;background:#2e2e2e"></div>
<svg class="abs" style="left:70px;top:311px" width="100" height="18" viewBox="0 0 100 18">
<path d="M12,4.500l4.500,4.500 -4.500,4.500 -4.500,-4.500z" fill="none" stroke="#ccc"/><path d="M9,4l5,5 -5,5 -5,-5z" fill="#d8d8d8"/>
<path d="M32,4.500l4.500,4.500 -4.500,4.500 -4.500,-4.500z" fill="none" stroke="#ddd"/><path d="M38,4l5,5 -5,5 -5,-5z" fill="#e0e0e0"/>
<path d="M66,6.500l5,4.500 -5,4.500 -5,-4.500z" fill="none" stroke="#ccc"/><path d="M66,1.500l5,4.500 -5,4.500 -5,-4.500z" fill="#d8d8d8"/>
<path d="M88,1.500l5,4.500 -5,4.500 -5,-4.500z" fill="none" stroke="#ddd"/><path d="M88,6.500l5,4.500 -5,4.500 -5,-4.500z" fill="#e0e0e0"/>
</svg>
<div class="sep" style="top:336px"></div>
<span class="l" style="left:-15px;top:347px">Copies:</span>
<div class="abs" style="left:70px;top:345px;width:75px;height:18px;background:#575757;border:1px solid #2a2a2a"></div>
<span class="t" style="left:77px;top:347px">5 x 5</span>
<div class="abs" style="left:127px;top:348px;width:1px;height:12px;background:#3a3a3a"></div><div class="tri" style="left:132px;top:352px;border-top-width:5px"></div>
<div class="cb" style="left:70px;top:374px"></div><svg class="abs" style="left:70px;top:370px" width="13" height="14" viewBox="0 0 13 14"><path d="M2.500,8 L5.500,12 L11.500,2" fill="none" stroke="#f0f0f0" stroke-width="1.600"/></svg>
<span class="t" style="left:85px;top:373px">Dim Copies to:</span>
<div class="fld" style="left:163px;top:371px;width:54px;height:18px;font-size:11.500px;line-height:15px;padding-left:3px">100%</div>
<div class="dd" style="left:216px;top:371px;width:15px;height:18px;background:#575757"></div><div class="tri" style="left:219.500px;top:378px;border-top-width:5px"></div>
<div class="cb" style="left:70px;top:396px"></div><svg class="abs" style="left:70px;top:392px" width="13" height="14" viewBox="0 0 13 14"><path d="M2.500,8 L5.500,12 L11.500,2" fill="none" stroke="#f0f0f0" stroke-width="1.600"/></svg>
<span class="t" style="left:85px;top:395px">Show Tile Edge</span>
<div class="cb" style="left:70px;top:416px"></div>
<span class="t" style="left:85px;top:415px">Show Swatch Bounds</span>
</div>
<!-- dropdown menu -->
<div class="abs" id="ddm" style="left:199px;top:294px;width:153px;height:108px;background:#4d4d4d;border:1px solid #2a2a2a;box-shadow:0 2px 5px rgba(0,0,0,.4)">
<div class="abs" style="left:0;top:0;width:151px;height:21px;background:#5e5e5e"></div>
<span class="lbl mi" style="left:39px;top:3px">Grid</span>
<span class="lbl mi" style="left:39px;top:25px">Brick by Row</span>
<span class="lbl mi" style="left:39px;top:47px">Brick by Column</span>
<span class="lbl mi" style="left:39px;top:69px">Hex by Column</span>
<span class="lbl mi" style="left:39px;top:91px">Hex by Row</span>
<svg class="abs" style="left:0;top:0" width="40" height="108" viewBox="0 0 40 108"><g fill="none" stroke="#dcdcdc" stroke-width="1">
<path d="M20.500,4.500h10v10h-10zM20.500,7.800h10M20.500,11.200h10M23.800,4.500v10M27.200,4.500v10"/>
<path shape-rendering="crispEdges" d="M22.500,26.500h7v3h-7zM20.500,29.500h5v3h-5zM25.500,29.500h6v3h-6zM22.500,32.500h7v3h-7z"/>
<path shape-rendering="crispEdges" d="M20.500,50.500h3v7h-3zM23.500,48.500h3v5h-3zM23.500,53.500h3v6h-3zM26.500,50.500h3v7h-3z"/>
<path d="M20,76 l3,-5h6l3,5 -3,5h-6z"/>
<path d="M25.500,92 l5,3v6l-5,3 -5,-3v-6z"/>
</g><path d="M5,32 L8,36 L13,27" fill="none" stroke="#eee" stroke-width="1.800"/></svg>
</div>
<style>.mi{font-size:12.700px;color:#ececec;line-height:16px;margin-top:-1px}</style>
<!-- cursor -->
<svg class="abs" style="left:259px;top:297px" width="14" height="20" viewBox="0 0 14 20"><path d="M1,1 V15.500 L4.500,12.300 L7.200,18.300 L9.800,17.200 L7.200,11.300 L12,11 Z" fill="#000" stroke="#fff" stroke-width="1.100" stroke-linejoin="round"/></svg>
<style>
#sw{z-index:3;position:absolute;left:1000px;top:102px;width:241px;height:415px;background:#424242;border:1px solid #2a2a2a}
#sw .tab{position:absolute;top:2px;height:18px;font-size:11px;font-weight:bold;line-height:16px;color:#a8a8a8;white-space:nowrap;overflow:hidden;padding-left:7px;letter-spacing:-0.300px}
</style>
<div id="sw">
<div class="abs" style="left:0;top:0;width:239px;height:20px;background:#2e2e2e"></div>
<div class="tab" style="left:0;width:35px;background:#3a3a3a">Color</div>
<div class="tab" style="left:35px;width:61px;background:#424242;color:#f0f0f0;height:19px;padding-left:6px">Swatches</div>
<div class="tab" style="left:99px;width:37px;background:#3a3a3a;padding-left:4px">Color G</div>
<div class="tab" style="left:137px;width:37px;background:#3a3a3a;padding-left:5px">Color T</div>
<svg class="abs" style="left:198px;top:6px" width="40" height="10" viewBox="0 0 40 10"><path d="M1,1l4.500,4 -4.500,4zM6.500,1l4.500,4 -4.500,4z" fill="#ccc"/><path d="M18.500,0v10" stroke="#555"/><path d="M24,3h4l-2,2.500z" fill="#ccc"/><path d="M29.500,1h8M29.500,3.500h8M29.500,6h8M29.500,8.500h8" stroke="#ccc" stroke-width="1.100"/></svg>
<!-- fill/stroke -->
<svg class="abs" style="left:5px;top:25px" width="32" height="32" viewBox="0 0 32 32"><rect x="11.500" y="11.500" width="18" height="18" fill="#fff" stroke="#2a2a2a"/><rect x="16" y="16" width="9" height="9" fill="#424242"/><path d="M12,29 L29,12" stroke="#c8102e" stroke-width="2"/><rect x="1.500" y="1.500" width="18" height="18" fill="#5b6e2f" stroke="#f0f0f0" stroke-width="1.200"/></svg>
<!-- view buttons -->
<div class="abs" style="left:183px;top:27px;width:25px;height:21px;background:#5e5e5e;border:1px solid #2a2a2a"></div>
<div class="abs" style="left:208px;top:27px;width:25px;height:21px;background:#2c2c2c;border:1px solid #2a2a2a"></div>
<svg class="abs" style="left:183px;top:27px" width="50" height="21" viewBox="0 0 50 21"><path d="M6,5.500h13M6,9h13M6,12.500h13M6,16h13" stroke="#e6e6e6" stroke-width="1.600"/><g fill="#d8d8d8"><rect x="31" y="4" width="3.500" height="3.500"/><rect x="36" y="4" width="3.500" height="3.500"/><rect x="41" y="4" width="3.500" height="3.500"/><rect x="31" y="9" width="3.500" height="3.500"/><rect x="36" y="9" width="3.500" height="3.500"/><rect x="41" y="9" width="3.500" height="3.500"/><rect x="31" y="14" width="3.500" height="3.500"/><rect x="36" y="14" width="3.500" height="3.500"/><rect x="41" y="14" width="3.500" height="3.500"/></g></svg>
<!-- swatch area -->
<div class="abs" style="left:4px;top:59px;width:218px;height:329px;border:1px solid #333;background:#424242"></div>
<div class="abs" style="left:223px;top:59px;width:12px;height:329px;background:linear-gradient(90deg,#2a2a2a,#363636)"></div>
<div class="abs" style="left:225px;top:66px;width:0;height:0;border-left:4px solid transparent;border-right:4px solid transparent;border-bottom:5px solid #777"></div>
<div class="abs" style="left:225px;top:376px;width:0;height:0;border-left:4px solid transparent;border-right:4px solid transparent;border-top:5px solid #777"></div>
<svg class="abs" style="left:0;top:0" width="239" height="160" viewBox="0 0 239 160"><defs><linearGradient id="sg1"><stop offset="0" stop-color="#fff"/><stop offset="1" stop-color="#111"/></linearGradient><linearGradient id="sg2"><stop offset="0" stop-color="#fff200"/><stop offset="1" stop-color="#f15a24"/></linearGradient><linearGradient id="sg3"><stop offset="0" stop-color="#1b75bc"/><stop offset="1" stop-color="#1b75bc" stop-opacity="0.150"/></linearGradient><pattern id="chk" width="4" height="4" patternUnits="userSpaceOnUse"><rect width="4" height="4" fill="#fff"/><rect width="2" height="2" fill="#bbb"/><rect x="2" y="2" width="2" height="2" fill="#bbb"/></pattern></defs><rect x="6" y="62" width="13" height="13" fill="#fff"/><path d="M6,75 L19,62" stroke="#c8102e" stroke-width="2"/><rect x="20" y="62" width="13" height="13" fill="#fff"/><g fill="none" stroke="#222" stroke-width="1"><circle cx="26.5" cy="68.5" r="4.500"/><circle cx="26.5" cy="68.5" r="2"/><path d="M26.5,62v13M20,68.5h13"/></g><rect x="34" y="62" width="13" height="13" fill="#ffffff"/><rect x="48" y="62" width="13" height="13" fill="#000000"/><rect x="62" y="62" width="13" height="13" fill="#e2001a"/><rect x="76" y="62" width="13" height="13" fill="#fcee21"/><rect x="90" y="62" width="13" height="13" fill="#1eae53"/><rect x="104" y="62" width="13" height="13" fill="#27a9e1"/><rect x="118" y="62" width="13" height="13" fill="#2e3192"/><rect x="132" y="62" width="13" height="13" fill="#e6007e"/><rect x="146" y="62" width="13" height="13" fill="#c4122f"/><rect x="160" y="62" width="13" height="13" fill="#e8262d"/><rect x="174" y="62" width="13" height="13" fill="#ea4e2a"/><rect x="188" y="62" width="13" height="13" fill="#f18a21"/><rect x="202" y="62" width="13" height="13" fill="#f5a331"/><rect x="6" y="76" width="13" height="13" fill="#f5ea14"/><rect x="20" y="76" width="13" height="13" fill="#d7df23"/><rect x="34" y="76" width="13" height="13" fill="#8cc63f"/><rect x="48" y="76" width="13" height="13" fill="#3ab54a"/><rect x="62" y="76" width="13" height="13" fill="#22a04a"/><rect x="76" y="76" width="13" height="13" fill="#007a3d"/><rect x="90" y="76" width="13" height="13" fill="#2bb673"/><rect x="104" y="76" width="13" height="13" fill="#18a79b"/><rect x="118" y="76" width="13" height="13" fill="#29a9df"/><rect x="132" y="76" width="13" height="13" fill="#1b75bc"/><rect x="146" y="76" width="13" height="13" fill="#2a3a95"/><rect x="160" y="76" width="13" height="13" fill="#241c5c"/><rect x="174" y="76" width="13" height="13" fill="#5b2a8e"/><rect x="188" y="76" width="13" height="13" fill="#8f1f8e"/><rect x="202" y="76" width="13" height="13" fill="#9e1f63"/><rect x="6" y="90" width="13" height="13" fill="#d4145a"/><rect x="20" y="90" width="13" height="13" fill="#e5097f"/><rect x="34" y="90" width="13" height="13" fill="#c2b59b"/><rect x="48" y="90" width="13" height="13" fill="#998675"/><rect x="62" y="90" width="13" height="13" fill="#736357"/><rect x="76" y="90" width="13" height="13" fill="#534741"/><rect x="90" y="90" width="13" height="13" fill="#c49a6c"/><rect x="104" y="90" width="13" height="13" fill="#a67c52"/><rect x="118" y="90" width="13" height="13" fill="#8b5e3c"/><rect x="132" y="90" width="13" height="13" fill="#754c29"/><rect x="146" y="90" width="13" height="13" fill="#603813"/><rect x="160" y="90" width="13" height="13" fill="#3c2415"/><rect x="174" y="90" width="13" height="13" fill="url(#sg1)"/><rect x="188" y="90" width="13" height="13" fill="url(#sg2)"/><rect x="202" y="90" width="13" height="13" fill="url(#chk)"/><rect x="202" y="90" width="13" height="13" fill="url(#sg3)"/><rect x="6" y="104" width="13" height="13" fill="#000"/><circle cx="12.5" cy="110.5" r="4.500" fill="url(#chk)"/><rect x="20" y="104" width="13" height="13" fill="#dff0c8"/><circle cx="24" cy="108" r="3" fill="#6cb33f"/><circle cx="30" cy="113" r="3" fill="#6cb33f"/><circle cx="23" cy="115" r="2" fill="#8cc63f"/><circle cx="31" cy="106" r="2" fill="#8cc63f"/><rect x="34" y="104" width="13" height="13" fill="#e9dccb"/><g fill="#a23b2a"><circle cx="37" cy="107" r="1.800"/><circle cx="43" cy="108" r="1.800"/><circle cx="39" cy="113" r="1.800"/><circle cx="45" cy="114" r="1.800"/><circle cx="35" cy="116" r="1.300"/><circle cx="41" cy="105" r="1.200"/></g><rect x="48" y="104" width="13" height="13" fill="#7f9a44"/><path d="M61,109v8h-8z" fill="#fff"/><path d="M52,117.5L61.5,108" stroke="#111" stroke-width="1.200"/><rect x="62" y="104" width="13" height="13" fill="#fff"/><g fill="#d02a55"><circle cx="66" cy="108" r="2.200"/><circle cx="71.5" cy="107.5" r="1.500"/><circle cx="70.5" cy="113.5" r="2.200"/><circle cx="65" cy="113" r="1.400"/></g><g fill="#5a7a30"><circle cx="68" cy="110.5" r="1"/><circle cx="73" cy="115" r="1"/></g><path d="M7,132v-9h4l1.500,1.500h5.500v7.500z" fill="#a8a8a8"/><path d="M7,126.5h11" stroke="#8a8a8a"/><rect x="20" y="120" width="13" height="13" fill="#000000"/><rect x="34" y="120" width="13" height="13" fill="#333333"/><rect x="48" y="120" width="13" height="13" fill="#4d4d4d"/><rect x="62" y="120" width="13" height="13" fill="#666666"/><rect x="76" y="120" width="13" height="13" fill="#808080"/><rect x="90" y="120" width="13" height="13" fill="#999999"/><rect x="104" y="120" width="13" height="13" fill="#b3b3b3"/><rect x="118" y="120" width="13" height="13" fill="#c2c2c2"/><rect x="132" y="120" width="13" height="13" fill="#d0d0d0"/><rect x="146" y="120" width="13" height="13" fill="#e2e2e2"/><rect x="160" y="120" width="13" height="13" fill="#efefef"/><path d="M7,148v-9h4l1.500,1.500h5.500v7.500z" fill="#a8a8a8"/><path d="M7,142.5h11" stroke="#8a8a8a"/><rect x="20" y="136" width="13" height="13" fill="#e2001a"/><rect x="34" y="136" width="13" height="13" fill="#f15a24"/><rect x="48" y="136" width="13" height="13" fill="#fcdd19"/><rect x="62" y="136" width="13" height="13" fill="#1eae53"/><rect x="76" y="136" width="13" height="13" fill="#2243a0"/><rect x="90" y="136" width="13" height="13" fill="#7b2a90"/></svg>
<!-- bottom bar -->
<div class="abs" style="left:0;top:388px;width:239px;height:1px;background:#2c2c2c"></div>
<svg class="abs" style="left:0;top:386px" width="239" height="25" viewBox="0 0 239 25">
<g fill="#cfcfcf"><rect x="9" y="5" width="1.500" height="9"/><rect x="11.500" y="5" width="1.500" height="9"/><path d="M14,5.500l1.500,-0.500 3.500,8.500 -1.500,0.500z"/><path d="M20,12h4l-2,2.500z"/></g>
<g fill="none" stroke="#cfcfcf" stroke-width="1.200"><circle cx="43" cy="10" r="2.500"/><path d="M45,8.500l3,-2M45,11.500l3,2"/></g><circle cx="49" cy="6" r="1.500" fill="#cfcfcf"/><circle cx="49" cy="14" r="1.500" fill="#cfcfcf"/>
<path d="M65,14h11a2.500,2.500 0 0 0 0,-5a4,4 0 0 0 -7.500,-1a3,3 0 0 0 -3.500,6z" fill="#606060"/>
<g fill="none" stroke="#cfcfcf" stroke-width="1"><rect x="95.500" y="4.500" width="9" height="9"/><path d="M95.500,7.500h9M95.500,10.500h9M98.500,4.500v9M101.500,4.500v9"/></g><path d="M106,13h4l-2,2.500z" fill="#cfcfcf"/>
<g fill="none" stroke="#606060" stroke-width="1"><rect x="124.500" y="4.500" width="9" height="10"/><path d="M126,7.500h6M126,9.500h6M126,11.500h6"/></g>
<path d="M148,14.500v-9h4l1.500,1.500h6v7.500z" fill="#bdbdbd"/>
<path d="M174,5h9v10h-6l-3,-3z" fill="#cfcfcf"/><path d="M174,12h3v3z" fill="#424242"/>
<g fill="#5e5e5e"><rect x="201" y="7" width="8" height="8"/><rect x="200" y="5" width="10" height="1.500"/><rect x="203.500" y="3.500" width="3" height="1.500"/></g>
<g fill="#222"><rect x="231" y="12" width="1" height="1"/><rect x="233" y="12" width="1" height="1"/><rect x="235" y="12" width="1" height="1"/><rect x="233" y="10" width="1" height="1"/><rect x="235" y="10" width="1" height="1"/><rect x="235" y="8" width="1" height="1"/><rect x="231" y="14" width="1" height="1"/><rect x="233" y="14" width="1" height="1"/><rect x="235" y="14" width="1" height="1"/></g>
</svg>
<div class="abs" style="left:0;top:404px;width:239px;height:9px;background:#3a3a3a;border-top:1px solid #2c2c2c"></div>
<div class="abs" style="left:110px;top:406px;width:20px;height:4px;background:repeating-linear-gradient(90deg,#1c1c1c 0 1px,#3a3a3a 1px 2px)"></div>
</div>
<div class="abs" style="left:1240px;top:103px;width:40px;height:697px;background:#424242;border-left:2px solid #2a2a2a"></div>
<svg class="abs" style="left:1242px;top:103px" width="38" height="560" viewBox="1242 103 38 560">
<defs><g id="grip" fill="#1c1c1c"><rect x="0" y="0" width="1" height="4"/><rect x="2" y="0" width="1" height="4"/><rect x="4" y="0" width="1" height="4"/><rect x="6" y="0" width="1" height="4"/><rect x="8" y="0" width="1" height="4"/><rect x="10" y="0" width="1" height="4"/><rect x="12" y="0" width="1" height="4"/><rect x="14" y="0" width="1" height="4"/><rect x="16" y="0" width="1" height="4"/><rect x="18" y="0" width="1" height="4"/></g></defs>
<g stroke="#2a2a2a"><path d="M1242,227.500h38M1242,295.500h38M1242,394.500h38M1242,492.500h38M1242,560.500h38M1242,657.500h38"/></g>
<g stroke="#505050"><path d="M1242,228.500h38M1242,296.500h38M1242,395.500h38M1242,493.500h38M1242,561.500h38M1242,658.500h38"/></g>
<use href="#grip" x="1252" y="107"/><use href="#grip" x="1252" y="231"/><use href="#grip" x="1252" y="299"/><use href="#grip" x="1252" y="398"/><use href="#grip" x="1252" y="496"/><use href="#grip" x="1252" y="564"/>
<!-- palette -->
<path d="M1262,121c-6,0 -10.500,3.500 -10.500,8c0,4 3.500,6.500 7,6.500c2,0 2,-1.500 3.500,-1.500c1.500,0 2.500,1.500 5,1.500c4,0 6,-3 6,-6.500c0,-4.500 -5,-8 -11,-8z" fill="#cfcfcf"/><g fill="#424242"><circle cx="1256" cy="129" r="1.500"/><circle cx="1259" cy="125" r="1.500"/><circle cx="1264" cy="124.500" r="1.500"/><circle cx="1268" cy="128" r="1.500"/></g>
<!-- swatches selected -->
<rect x="1247" y="143" width="30" height="24" rx="3" fill="#2c2c2c"/>
<rect x="1253.500" y="148.500" width="17" height="12" fill="#d6d6d6" stroke="#d6d6d6"/><g fill="#222"><rect x="1255" y="150" width="4" height="4"/></g><g fill="#555"><rect x="1260" y="150" width="4" height="4"/><rect x="1265" y="150" width="4" height="4"/><rect x="1255" y="155" width="4" height="4"/><rect x="1260" y="155" width="4" height="4"/><rect x="1265" y="155" width="4" height="4"/></g>
<!-- color guide -->
<defs><linearGradient id="cg" x1="0" y1="0" x2="1" y2="1"><stop offset="0" stop-color="#e8e8e8"/><stop offset="1" stop-color="#555"/></linearGradient></defs>
<path d="M1254,175v16h16a16,16 0 0 0 -16,-16z" fill="url(#cg)" stroke="#d0d0d0" stroke-width="1"/>
<!-- share -->
<g fill="none" stroke="#cfcfcf" stroke-width="1.500"><circle cx="1259" cy="213" r="5.500"/><circle cx="1259" cy="213" r="2.500"/><path d="M1261,211l6,-6M1261,215l6,5"/></g><circle cx="1268" cy="204" r="2.200" fill="#cfcfcf"/><circle cx="1268" cy="221" r="2.200" fill="#cfcfcf"/>
<!-- brushes -->
<g fill="#cfcfcf"><rect x="1257" y="251" width="9" height="8"/><path d="M1258,250l-2,-7 2,-1 2,8zM1261,250v-9l1.500,-2 1,2v9zM1264,250l3,-7 2,1 -3,6z"/></g>
<!-- symbols club -->
<g fill="#cfcfcf"><circle cx="1262" cy="274" r="4"/><circle cx="1257.500" cy="280" r="4"/><circle cx="1266.500" cy="280" r="4"/><path d="M1261,280h2l1.500,7h-5z"/></g>
<!-- stroke -->
<g stroke="#cfcfcf"><path d="M1253,316h18" stroke-width="1"/><path d="M1253,321h18" stroke-width="2"/><path d="M1253,327.500h18" stroke-width="3.500"/></g>
<!-- gradient -->
<defs><linearGradient id="dg"><stop offset="0" stop-color="#3a3a3a"/><stop offset="1" stop-color="#e0e0e0"/></linearGradient></defs>
<rect x="1253.500" y="343.500" width="17" height="11" fill="url(#dg)" stroke="#d6d6d6"/>
<!-- transparency -->
<circle cx="1259" cy="374" r="6" fill="#cfcfcf"/><circle cx="1264" cy="380" r="6" fill="#8a8a8a" stroke="#cfcfcf" stroke-width="1.300"/>
<!-- CC libraries -->
<g fill="#bdbdbd" stroke="#d4d4d4" stroke-width="1.600"><ellipse cx="1258.500" cy="420" rx="6" ry="5.500"/><ellipse cx="1265.500" cy="418.500" rx="7" ry="7"/></g><path d="M1256,419.500c2,-3 5,-2 7,0s5,3 7,0" fill="none" stroke="#555" stroke-width="1.600"/>
<!-- appearance -->
<circle cx="1262" cy="446.500" r="7.500" fill="none" stroke="#cfcfcf" stroke-width="1.200" stroke-dasharray="2 1.500"/><circle cx="1262" cy="446.500" r="5" fill="#cfcfcf"/>
<!-- transform -->
<g fill="none" stroke="#cfcfcf" stroke-width="1.300"><rect x="1258.500" y="467.500" width="12" height="12"/><rect x="1254.500" y="474.500" width="7" height="7" fill="#424242"/><rect x="1257.500" y="477.500" width="5" height="5" fill="#424242"/></g>
<!-- layers -->
<path d="M1262,506l9,5 -9,5 -9,-5z" fill="#cfcfcf"/><path d="M1253,516l9,5 9,-5" fill="none" stroke="#cfcfcf" stroke-width="1.600"/>
<!-- artboards -->
<g fill="none" stroke="#cfcfcf" stroke-width="1.200"><rect x="1253.500" y="535.500" width="11" height="11"/><rect x="1258.500" y="540.500" width="12" height="10" fill="#424242"/></g>
<!-- artboard tool -->
<g fill="none" stroke="#cfcfcf" stroke-width="1.200"><rect x="1255.500" y="578.500" width="13" height="12" stroke-dasharray="2 1.500"/><path d="M1253,576h4M1253,576v4M1271,576h-4M1271,576v4M1253,593h4M1253,593v-4M1271,593h-4M1271,593v-4"/></g><rect x="1261" y="583.500" width="2" height="2" fill="#cfcfcf"/>
<!-- align -->
<g fill="#cfcfcf"><rect x="1254" y="603" width="1.500" height="17"/><rect x="1257" y="605" width="13" height="5"/><rect x="1257" y="613" width="8" height="5"/></g>
<!-- pathfinder -->
<g fill="#cfcfcf"><rect x="1254" y="632" width="10" height="10"/><rect x="1260" y="638" width="10" height="10" fill="#9a9a9a" stroke="#cfcfcf"/></g>
</svg>
<!-- vertical scrollbar -->
<div class="abs" style="left:1224px;top:139px;width:16px;height:645px;background:#2e2e2e"></div>
<div class="abs" style="left:1228px;top:771px;width:0;height:0;border-left:4.500px solid transparent;border-right:4.500px solid transparent;border-top:6px solid #e0e0e0"></div>
<!-- status bar -->
<div class="abs" style="left:75px;top:783px;width:1149px;height:17px;background:#424242"></div>
<div class="abs" style="left:537px;top:783px;width:687px;height:17px;background:#2c2c2c"></div>
<div class="abs" style="left:1224px;top:784px;width:16px;height:16px;background:#424242"></div>
<div class="abs" style="left:873px;top:784px;width:15px;height:16px;background:#8e8e8e"></div>
<svg class="abs" style="left:75px;top:783px" width="1149" height="17" viewBox="75 783 1149 17">
<g fill="none" stroke="#d0d0d0" stroke-width="1.200"><path d="M91,789h-5.500v8h10v-3"/><path d="M88,794c1,-3 3,-4.500 7,-4.500"/></g><path d="M94,786l4,3.500 -4,3.500z" fill="#d0d0d0"/>
<rect x="109.500" y="784.500" width="52" height="16" fill="#9a9a9a" stroke="#2a2a2a"/><rect x="161.500" y="784.500" width="15" height="16" fill="#575757" stroke="#2a2a2a"/><path d="M165,790h8l-4,5.500z" fill="#e0e0e0"/>
<g fill="#6a6a6a"><path d="M196,788.500v8l-6,-4z"/><rect x="188" y="788.500" width="1.500" height="8"/><path d="M210,788.500v8l-6,-4z"/></g>
<rect x="220.500" y="784.500" width="41" height="16" fill="#9a9a9a" stroke="#2a2a2a"/><rect x="261.500" y="784.500" width="15" height="16" fill="#575757" stroke="#2a2a2a"/><path d="M265,790h8l-4,5.500z" fill="#e0e0e0"/>
<g fill="#6a6a6a"><path d="M286,788.500v8l6,-4z"/><path d="M301,788.500v8l6,-4z"/><rect x="307.500" y="788.500" width="1.500" height="8"/></g>
<path d="M318.500,784v16" stroke="#2c2c2c"/>
<path d="M522,783v17M536,783v17" stroke="#2c2c2c"/>
<path d="M525,788v8l6,-4z" fill="#d8d8d8"/>
<path d="M549,788v8l-6,-4z" fill="#e6e6e6"/>
<path d="M1212,788v8l6,-4z" fill="#e6e6e6"/>
</svg>
<span class="lbl" style="left:112px;top:786px;font-size:12px;color:#111;letter-spacing:-0.300px">100%</span>
<span class="lbl" style="left:223px;top:786px;font-size:12px;color:#111">1</span>
<span class="lbl" style="left:397px;top:786px;font-size:11px;color:#e6e6e6;letter-spacing:-0.100px">Selection</span>
</body></html>
